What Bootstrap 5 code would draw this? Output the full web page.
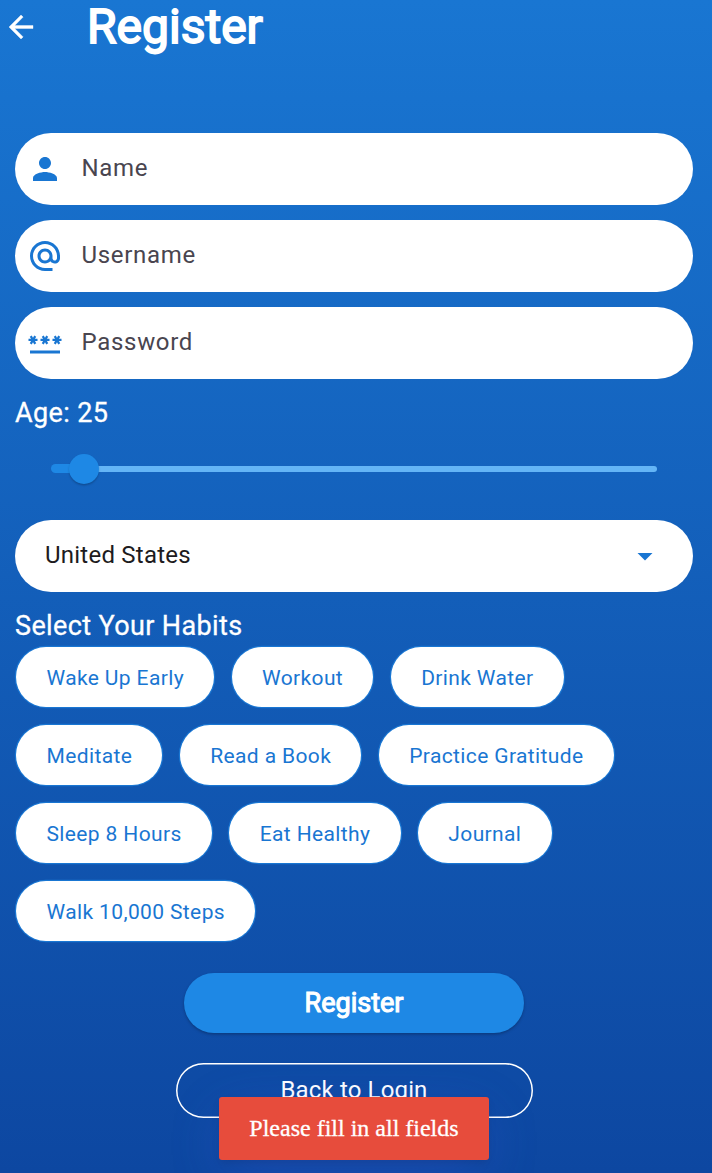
<!DOCTYPE html>
<html lang="en">
<head>
<meta charset="utf-8">
<meta name="viewport" content="width=device-width, initial-scale=1">
<title>Register</title>
<link href="https://cdn.jsdelivr.net/npm/bootstrap@5.3.0/dist/css/bootstrap.min.css" rel="stylesheet">
<style>
html, body { height: 100%; }
body { font-family: Roboto, sans-serif; color: #fff; background: linear-gradient(180deg, #1976d2, #0d47a1); overflow: hidden; }
.topbar { height: 54px; padding-left: 3px; gap: 48px; }
.topbar h1 { font-size: 48px; line-height: 53px; font-weight: 400; -webkit-text-stroke: 1.8px #fff; }
.topbar .ico { stroke: currentColor; stroke-width: .25; }
.page-body { padding: 78.75px 19px 0 15px; }
.ico { width: 36px; height: 36px; fill: currentColor; flex: none; }
.field { height: 72px; margin-bottom: 15px; padding-left: 12px; gap: 18.5px; color: #1976d2; font-size: 24px; letter-spacing: .7px; }
.field span { color: #49454f; line-height: 34px; padding-bottom: 2px; }
.age-line, .habit-line { font-size: 27px; line-height: 39px; letter-spacing: .37px; -webkit-text-stroke: .3px #fff; }
.slider { height: 72px; margin: 0 36px; }
.track-on { height: 9px; width: 33.3px; background: #1e88e5; border-radius: 5px 0 0 5px; }
.track-off { height: 6px; background: #64b5f6; border-radius: 0 3px 3px 0; }
.thumb { width: 30px; height: 30px; margin: 0 -15px; background: #1e88e5; box-shadow: 0 1.5px 2px rgba(0,0,0,.22); z-index: 1; flex: none; }
.country { height: 72px; margin: 15px 0; padding: 0 30px; color: #1d1b20; font-size: 24px; letter-spacing: .23px; }
.country span { padding-bottom: 2px; }
.country .ico { color: #1976d2; }
.habits { gap: 18px 17.5px; padding: 1.3px 1.25px; }
.habit { height: 60px; padding: 0 30.25px; box-shadow: 0 0 0 1.25px #1976d2; color: #1976d2; background: #fff; font-size: 21px; line-height: 62px; letter-spacing: .375px; white-space: nowrap; }
.btn-main { width: 340px; height: 60px; margin-top: 30.5px; background: #1e88e5; color: #fff; font-size: 27px; -webkit-text-stroke: 1.1px #fff; line-height: 60px; padding: 0; border: 0; box-shadow: 0 1.5px 3px rgba(0,0,0,.25); }
.btn-back { width: 357px; height: 55px; margin-top: 30px; border: 0; box-shadow: inset 0 0 0 1.5px #fff; color: #fff; font-size: 24px; letter-spacing: .15px; line-height: 54px; padding: 0; }
.notice { width: 270px; height: 63px; left: 219px; bottom: 13px; border-radius: 3px; background: #e74c3c; font: 24px/63px "Liberation Serif", serif; -webkit-text-stroke: .3px #fff; box-shadow: 0 4px 9px -1px rgba(0,0,0,.1), 0 15px 54px -6px rgba(77,96,232,.27); }
</style>
</head>
<body>
<header class="topbar d-flex align-items-start">
  <svg class="ico align-self-center" viewBox="0 0 24 24"><path d="M20 11H7.83l5.59-5.59L12 4l-8 8 8 8 1.41-1.41L7.83 13H20v-2z"/></svg>
  <h1 class="m-0">Register</h1>
</header>
<main class="page-body">
  <div class="field bg-white rounded-pill d-flex align-items-center">
    <svg class="ico" viewBox="0 0 24 24"><path d="M12 12c2.21 0 4-1.79 4-4s-1.79-4-4-4-4 1.79-4 4 1.79 4 4 4zm0 2c-2.67 0-8 1.34-8 4v2h16v-2c0-2.66-5.33-4-8-4z"/></svg>
    <span>Name</span>
  </div>
  <div class="field bg-white rounded-pill d-flex align-items-center">
    <svg class="ico" viewBox="0 0 24 24"><path d="M12 2C6.48 2 2 6.48 2 12s4.48 10 10 10h5v-2h-5c-4.34 0-8-3.66-8-8s3.66-8 8-8 8 3.66 8 8v1.43c0 .79-.71 1.57-1.5 1.57s-1.5-.78-1.5-1.57V12c0-2.76-2.24-5-5-5s-5 2.24-5 5 2.24 5 5 5c1.38 0 2.64-.56 3.54-1.47.65.89 1.77 1.47 2.96 1.47 1.97 0 3.5-1.6 3.5-3.57V12c0-5.52-4.48-10-10-10zm0 13c-1.66 0-3-1.34-3-3s1.34-3 3-3 3 1.34 3 3-1.34 3-3 3z"/></svg>
    <span>Username</span>
  </div>
  <div class="field bg-white rounded-pill d-flex align-items-center">
    <svg class="ico" viewBox="0 0 24 24"><path d="M2 17h20v2H2zM3.15 12.95 4 11.47l.85 1.48 1.3-.75-.85-1.48H7v-1.5H5.3l.85-1.47L4.85 7 4 8.47 3.15 7l-1.3.75.85 1.47H1v1.5h1.7l-.85 1.48zM9.85 12.2l1.3.75.85-1.48.85 1.48 1.3-.75-.85-1.48H15v-1.5h-1.7l.85-1.47-1.3-.75L12 8.47 11.15 7l-1.3.75.85 1.47H9v1.5h1.7zM23 9.22h-1.7l.85-1.47-1.3-.75L20 8.47 19.15 7l-1.3.75.85 1.47H17v1.5h1.7l-.85 1.48 1.3.75.85-1.48.85 1.48 1.3-.75-.85-1.48H23z"/></svg>
    <span>Password</span>
  </div>
  <div class="age-line">Age: 25</div>
  <div class="slider d-flex align-items-center">
    <div class="track-on"></div>
    <div class="thumb rounded-circle"></div>
    <div class="track-off flex-grow-1"></div>
  </div>
  <div class="country bg-white rounded-pill d-flex align-items-center justify-content-between">
    <span>United States</span>
    <svg class="ico" viewBox="0 0 24 24"><path d="M7 10l5 5 5-5z"/></svg>
  </div>
  <div class="habit-line">Select Your Habits</div>
  <div class="habits d-flex flex-wrap">
    <div class="habit rounded-pill">Wake Up Early</div>
    <div class="habit rounded-pill">Workout</div>
    <div class="habit rounded-pill">Drink Water</div>
    <div class="habit rounded-pill">Meditate</div>
    <div class="habit rounded-pill">Read a Book</div>
    <div class="habit rounded-pill">Practice Gratitude</div>
    <div class="habit rounded-pill">Sleep 8 Hours</div>
    <div class="habit rounded-pill">Eat Healthy</div>
    <div class="habit rounded-pill">Journal</div>
    <div class="habit rounded-pill">Walk 10,000 Steps</div>
  </div>
  <div class="d-flex flex-column align-items-center">
    <button class="btn btn-main rounded-pill" type="button">Register</button>
    <button class="btn btn-back rounded-pill" type="button">Back to Login</button>
  </div>
</main>
<div class="notice position-absolute text-center" role="alert">Please fill in all fields</div>
<script src="https://cdn.jsdelivr.net/npm/bootstrap@5.3.0/dist/js/bootstrap.bundle.min.js"></script>
</body>
</html>
